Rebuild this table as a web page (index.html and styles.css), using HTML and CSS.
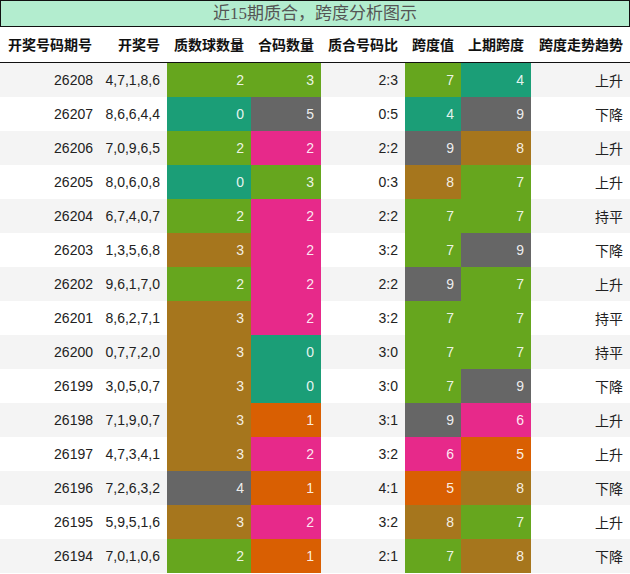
FILE: index.html
```html
<!DOCTYPE html>
<html lang="zh">
<head>
<meta charset="utf-8">
<title>近15期质合，跨度分析图示</title>
<link rel="stylesheet" href="styles.css">
</head>
<body>
<div class="title">近15期质合，跨度分析图示</div>
<table class="grid">
<colgroup>
<col class="w1"><col class="w2"><col class="w3"><col class="w4"><col class="w5"><col class="w6"><col class="w7"><col class="w8">
</colgroup>
<thead>
<tr><th>开奖号码期号</th><th>开奖号</th><th>质数球数量</th><th>合码数量</th><th>质合号码比</th><th>跨度值</th><th>上期跨度</th><th>跨度走势趋势</th></tr>
</thead>
<tbody>
<tr><td>26208</td><td>4,7,1,8,6</td><td class="c g">2</td><td class="c g">3</td><td>2:3</td><td class="c g">7</td><td class="c t">4</td><td>上升</td></tr>
<tr><td>26207</td><td>8,6,6,4,4</td><td class="c t">0</td><td class="c y">5</td><td>0:5</td><td class="c t">4</td><td class="c y">9</td><td>下降</td></tr>
<tr><td>26206</td><td>7,0,9,6,5</td><td class="c g">2</td><td class="c p">2</td><td>2:2</td><td class="c y">9</td><td class="c b">8</td><td>上升</td></tr>
<tr><td>26205</td><td>8,0,6,0,8</td><td class="c t">0</td><td class="c g">3</td><td>0:3</td><td class="c b">8</td><td class="c g">7</td><td>上升</td></tr>
<tr><td>26204</td><td>6,7,4,0,7</td><td class="c g">2</td><td class="c p">2</td><td>2:2</td><td class="c g">7</td><td class="c g">7</td><td>持平</td></tr>
<tr><td>26203</td><td>1,3,5,6,8</td><td class="c b">3</td><td class="c p">2</td><td>3:2</td><td class="c g">7</td><td class="c y">9</td><td>下降</td></tr>
<tr><td>26202</td><td>9,6,1,7,0</td><td class="c g">2</td><td class="c p">2</td><td>2:2</td><td class="c y">9</td><td class="c g">7</td><td>上升</td></tr>
<tr><td>26201</td><td>8,6,2,7,1</td><td class="c b">3</td><td class="c p">2</td><td>3:2</td><td class="c g">7</td><td class="c g">7</td><td>持平</td></tr>
<tr><td>26200</td><td>0,7,7,2,0</td><td class="c b">3</td><td class="c t">0</td><td>3:0</td><td class="c g">7</td><td class="c g">7</td><td>持平</td></tr>
<tr><td>26199</td><td>3,0,5,0,7</td><td class="c b">3</td><td class="c t">0</td><td>3:0</td><td class="c g">7</td><td class="c y">9</td><td>下降</td></tr>
<tr><td>26198</td><td>7,1,9,0,7</td><td class="c b">3</td><td class="c o">1</td><td>3:1</td><td class="c y">9</td><td class="c p">6</td><td>上升</td></tr>
<tr><td>26197</td><td>4,7,3,4,1</td><td class="c b">3</td><td class="c p">2</td><td>3:2</td><td class="c p">6</td><td class="c o">5</td><td>上升</td></tr>
<tr><td>26196</td><td>7,2,6,3,2</td><td class="c y">4</td><td class="c o">1</td><td>4:1</td><td class="c o">5</td><td class="c b">8</td><td>下降</td></tr>
<tr><td>26195</td><td>5,9,5,1,6</td><td class="c b">3</td><td class="c p">2</td><td>3:2</td><td class="c b">8</td><td class="c g">7</td><td>上升</td></tr>
<tr><td>26194</td><td>7,0,1,0,6</td><td class="c g">2</td><td class="c o">1</td><td>2:1</td><td class="c g">7</td><td class="c b">8</td><td>下降</td></tr>
</tbody>
</table>
</body>
</html>
```
FILE: styles.css
```css
html, body {
  margin: 0;
  padding: 0;
  background: #ffffff;
}
body {
  width: 630px;
  font-family: "Liberation Sans", "Noto Sans CJK SC", sans-serif;
  font-size: 14px;
  color: #222222;
}
.title {
  box-sizing: border-box;
  width: 630px;
  height: 27px;
  border: 1px solid #111111;
  background: #b3edcf;
  color: #555555;
  font-family: "Liberation Serif", "Noto Sans CJK SC", serif;
  font-size: 17px;
  line-height: 25px;
  text-align: center;
}
.grid {
  width: 630px;
  border-collapse: collapse;
  table-layout: fixed;
}
.w1 { width: 100px; }
.w2 { width: 67px; }
.w3 { width: 84px; }
.w4 { width: 70px; }
.w5 { width: 84px; }
.w6 { width: 56px; }
.w7 { width: 70px; }
.w8 { width: 99px; }
.grid th {
  height: 35px;
  padding: 0 7px 0 0;
  text-align: right;
  font-weight: bold;
  color: #111111;
  border-bottom: 1px solid #111111;
  white-space: nowrap;
  box-sizing: border-box;
}
.grid th:first-child {
  text-align: left;
  padding-left: 8px;
}
.grid td {
  height: 34px;
  padding: 0 7px 0 0;
  text-align: right;
  white-space: nowrap;
}
.grid tbody tr:nth-child(odd) td { background: #f4f4f4; }
.grid tbody tr:nth-child(even) td { background: #ffffff; }
.grid tbody tr td.c { color: rgba(255, 255, 255, 0.9); }
.grid tbody tr td.g { background: #66a61e; }
.grid tbody tr td.t { background: #1b9e77; }
.grid tbody tr td.y { background: #666666; }
.grid tbody tr td.p { background: #e7298a; }
.grid tbody tr td.o { background: #d95f02; }
.grid tbody tr td.b { background: #a6761d; }
```
